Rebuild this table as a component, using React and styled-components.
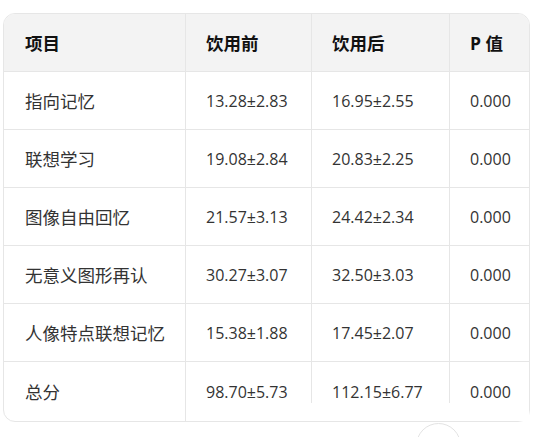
import React from "react";
import styled, { createGlobalStyle } from "styled-components";

const Global = createGlobalStyle`
  html, body { margin: 0; padding: 0; background: #fff; }
  body { font-family: "Open Sans", "Noto Sans CJK SC", sans-serif; overflow: hidden; }
`;

const Page = styled.div`
  position: relative;
  width: 541px;
  height: 437px;
  padding: 13px 11px 0 3px;
  box-sizing: border-box;
  overflow: hidden;
`;

const Frame = styled.div`
  position: relative;
  border: 1px solid #e6e6e6;
  border-radius: 12px;
  overflow: hidden;
  background: #fff;
`;

const Table = styled.table`
  width: 100%;
  border-collapse: separate;
  border-spacing: 0;
  table-layout: fixed;
`;

const HeadCell = styled.th`
  height: 58px;
  padding: 0 0 0 ${(p) => (p.$first ? 21 : 20)}px;
  text-align: left;
  background: #f3f3f3;
  color: #111;
  font-weight: 700;
  font-size: 17.5px;
  font-family: "Open Sans", "Noto Sans CJK SC", sans-serif;
  border-bottom: 1px solid #e6e6e6;
  border-right: ${(p) => (p.$last ? "none" : "1px solid #e6e6e6")};
  box-sizing: border-box;
`;

const Cell = styled.td`
  height: ${(p) => (p.$lastRow ? 59 : 58)}px;
  padding: 0 0 0 ${(p) => (p.$first ? 21 : 20)}px;
  text-align: left;
  color: #333;
  font-size: ${(p) => (p.$zh ? 17.5 : 16)}px;
  font-family: ${(p) =>
    p.$zh
      ? `"Noto Sans CJK SC", sans-serif`
      : `"Open Sans", "Noto Sans CJK SC", sans-serif`};
  border-bottom: ${(p) => (p.$lastRow ? "none" : "1px solid #e6e6e6")};
  border-right: ${(p) => (p.$last ? "none" : "1px solid #e6e6e6")};
  box-sizing: border-box;
  white-space: nowrap;
`;

const BottomFade = styled.div`
  position: absolute;
  left: 190px;
  right: 12px;
  top: 403px;
  height: 18px;
  background: #fff;
`;

const ScrollButton = styled.div`
  position: absolute;
  left: 416px;
  top: 423px;
  width: 45px;
  height: 45px;
  border-radius: 50%;
  border: 1px solid #e3e3e3;
  background: #fff;
  box-sizing: border-box;
`;

const rows = [
  ["指向记忆", "13.28±2.83", "16.95±2.55", "0.000"],
  ["联想学习", "19.08±2.84", "20.83±2.25", "0.000"],
  ["图像自由回忆", "21.57±3.13", "24.42±2.34", "0.000"],
  ["无意义图形再认", "30.27±3.07", "32.50±3.03", "0.000"],
  ["人像特点联想记忆", "15.38±1.88", "17.45±2.07", "0.000"],
  ["总分", "98.70±5.73", "112.15±6.77", "0.000"],
];

export default function App() {
  return (
    <>
      <Global />
      <Page>
        <Frame>
          <Table>
            <colgroup>
              <col style={{ width: 182 }} />
              <col style={{ width: 126 }} />
              <col style={{ width: 138 }} />
              <col />
            </colgroup>
            <thead>
              <tr>
                <HeadCell $first>项目</HeadCell>
                <HeadCell>饮用前</HeadCell>
                <HeadCell>饮用后</HeadCell>
                <HeadCell $last>P 值</HeadCell>
              </tr>
            </thead>
            <tbody>
              {rows.map((r, i) => (
                <tr key={i}>
                  {r.map((c, j) => (
                    <Cell
                      key={j}
                      $first={j === 0}
                      $zh={j === 0}
                      $last={j === 3}
                      $lastRow={i === rows.length - 1}
                    >
                      {c}
                    </Cell>
                  ))}
                </tr>
              ))}
            </tbody>
          </Table>
        </Frame>
        <BottomFade />
        <ScrollButton />
      </Page>
    </>
  );
}
